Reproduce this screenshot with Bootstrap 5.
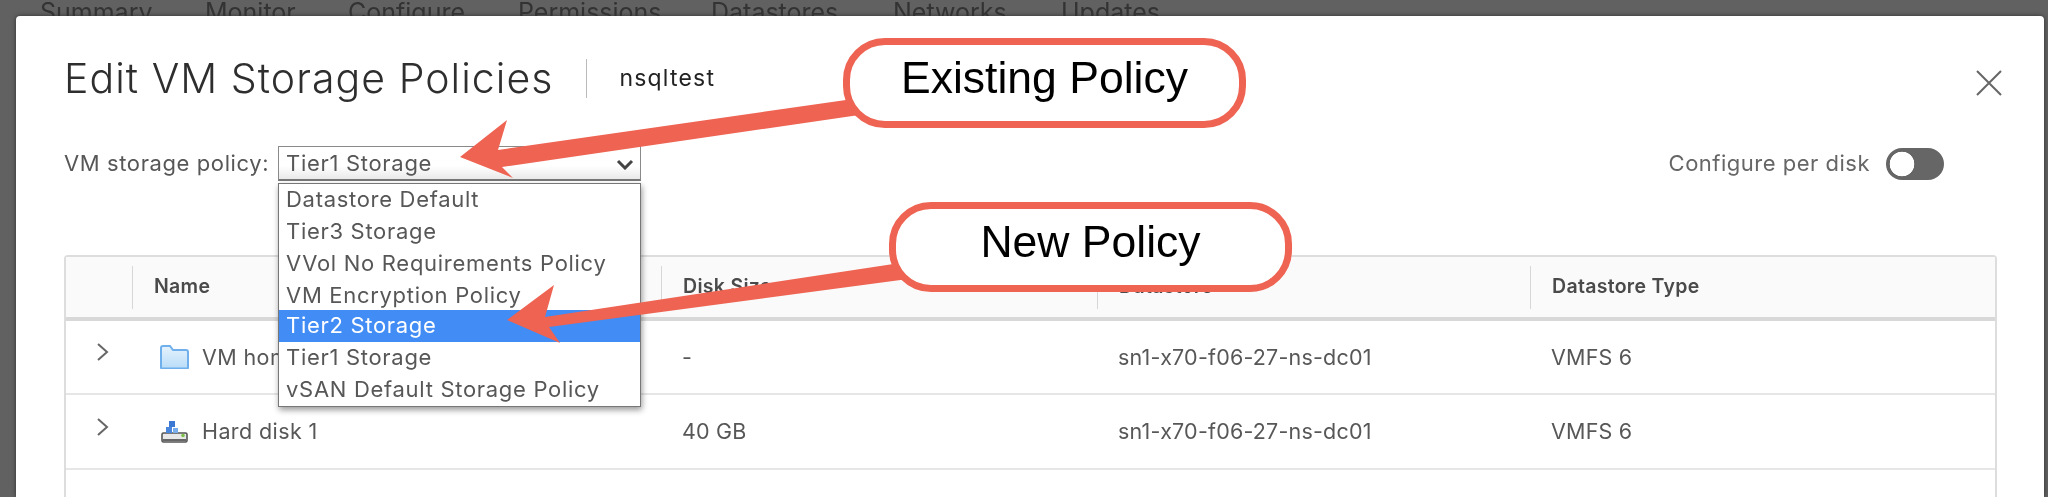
<!doctype html>
<html lang="en">
<head>
<meta charset="utf-8">
<title>Edit VM Storage Policies</title>
<link href="https://cdn.jsdelivr.net/npm/bootstrap@5.3.0/dist/css/bootstrap.min.css" rel="stylesheet">
<style>
html,body{height:497px;overflow:hidden}
body{background:#616161;font-family:Inter,"Noto Sans",sans-serif;color:#575757;font-size:22px}
.scene{position:relative;height:497px;overflow:hidden;filter:blur(.55px)}
.tabstrip{height:16px;overflow:hidden;font-size:25px;line-height:24px;color:#333;position:relative}
.tabstrip span{position:absolute;top:0}
.dialog{background:#fff;margin:0 4px 0 16px;height:481px;padding:42px 47px 0 48px;border-radius:4px 4px 0 0;box-shadow:0 0 4px rgba(0,0,0,.5)}
.dtitle{font-size:41px;font-weight:300;line-height:40px;color:#2e2e2e;letter-spacing:1.050px;white-space:nowrap}
.dsep{width:1px;height:39px;background:#bbb;margin:0 32px 0 33px}
.dsub{font-size:23px;color:#222;letter-spacing:1.200px}
.dclose{margin-right:-5px;margin-top:10px;line-height:0}
.polrow{margin-top:48px;height:35px}
.pollabel{width:214px;font-size:22px;letter-spacing:.6px;white-space:nowrap}
.selwrap{width:363px;position:relative}
.polselect.form-select{height:35px;border-radius:0;border:1px solid #8a8a8a;border-bottom:2px solid #777;padding:0 0 0 7px;font-size:22px;letter-spacing:.7px;color:#575757;line-height:30px;
 background:url("data:image/svg+xml,%3Csvg xmlns='http://www.w3.org/2000/svg' width='18' height='11'%3E%3Cpath d='M2 2l7 7 7-7' fill='none' stroke='%23444' stroke-width='3'/%3E%3C/svg%3E") no-repeat right 6px top 12px,linear-gradient(#fff 60%,#e9e9e9)}
.optlist{position:absolute;left:0;top:37px;width:363px;height:224px;border:1px solid #777;border-radius:0;box-shadow:1px 3px 6px rgba(0,0,0,.4);background:#fff;z-index:3}
.optlist .list-group-item{border:0;border-radius:0;height:32px;line-height:30px;padding:0 0 0 7px;font-size:22px;letter-spacing:.7px;color:#575757;white-space:nowrap;background:transparent}
.optlist .list-group-item.active{background:#418cf5;color:#fff;margin-top:-1px;height:32px}
.perdisk{font-size:22px;letter-spacing:.5px;margin-right:53px;gap:16px;color:#666}
.perdisk .form-check-input{width:58px;height:32px;margin:0;border:2px solid #666;border-radius:16px;background-color:#666;background-image:radial-gradient(circle at 14px 50%,#fff 12px,transparent 12.6px);background-position:0 0;background-size:auto;float:none}
.gridwrap{margin-top:74px;border:solid #ddd;border-width:2px 2px 0;border-radius:4px 4px 0 0;height:260px}
.vmtable{table-layout:fixed;width:100%;margin:0;--bs-table-bg:transparent;--bs-table-color:#575757}
.vmtable th{padding:0;height:62px;background:#fafafa;border-bottom:4px solid #d8d8d8;font-size:19.500px;font-weight:600;color:#4a4a4a;letter-spacing:.3px;vertical-align:middle}
.hcell{border-left:1px solid #d7d7d7;height:43px;display:flex;align-items:center;padding-left:21px;white-space:nowrap}
.vmtable td{height:75px;padding:0 0 0 21px;border-bottom:2px solid #e6e6e6;font-size:21.500px;letter-spacing:.2px;vertical-align:middle;white-space:nowrap;overflow:hidden}
.vmtable td.cexp{padding:0 0 14px 30px}
.namecell{display:flex;align-items:center;gap:13px}
.namecell svg{margin-left:7px;flex:none}
.namecell span{letter-spacing:.4px}
.arrows{position:absolute;left:0;top:0;z-index:4}
.callout{position:absolute;z-index:5;width:403px;height:90px;border:7px solid #ee6352;border-radius:42px;background:#fff;color:#000;font-family:"Liberation Sans",Arial,sans-serif;font-size:44.500px;padding-bottom:10px}
.callout-a{left:843px;top:38px}
.callout-b{left:889px;top:202px}
</style>
</head>
<body>
<div class="scene">
  <div class="tabstrip">
    <span style="left:40px">Summary</span><span style="left:205px">Monitor</span><span style="left:348px">Configure</span><span style="left:518px">Permissions</span><span style="left:711px">Datastores</span><span style="left:893px">Networks</span><span style="left:1061px">Updates</span>
  </div>
  <div class="dialog">
    <div class="d-flex align-items-center">
      <div class="dtitle">Edit VM Storage Policies</div>
      <div class="dsep"></div>
      <div class="dsub">nsqltest</div>
      <div class="dclose ms-auto">
        <svg width="26" height="26" viewBox="0 0 26 26"><path d="M1 1l24 24M25 1L1 25" stroke="#666" stroke-width="2" fill="none"/></svg>
      </div>
    </div>
    <div class="polrow d-flex align-items-center">
      <div class="pollabel">VM storage policy:</div>
      <div class="selwrap">
        <select class="form-select polselect" aria-label="VM storage policy"><option>Tier1 Storage</option></select>
        <div class="list-group optlist">
          <div class="list-group-item">Datastore Default</div>
          <div class="list-group-item">Tier3 Storage</div>
          <div class="list-group-item">VVol No Requirements Policy</div>
          <div class="list-group-item">VM Encryption Policy</div>
          <div class="list-group-item active">Tier2 Storage</div>
          <div class="list-group-item">Tier1 Storage</div>
          <div class="list-group-item">vSAN Default Storage Policy</div>
        </div>
      </div>
      <div class="perdisk ms-auto d-flex align-items-center">
        <span>Configure per disk</span>
        <input class="form-check-input" type="checkbox" aria-label="Configure per disk">
      </div>
    </div>
    <div class="gridwrap">
      <table class="table vmtable">
        <colgroup><col style="width:66px"><col style="width:529px"><col style="width:436px"><col style="width:433px"><col></colgroup>
        <thead><tr>
          <th></th>
          <th><div class="hcell">Name</div></th>
          <th><div class="hcell">Disk Size</div></th>
          <th><div class="hcell">Datastore</div></th>
          <th><div class="hcell">Datastore Type</div></th>
        </tr></thead>
        <tbody>
          <tr>
            <td class="cexp"><svg width="14" height="20" viewBox="0 0 14 20"><path d="M2 2l9 8-9 8" fill="none" stroke="#666" stroke-width="2"/></svg></td>
            <td><div class="namecell">
              <svg width="29" height="24" viewBox="0 0 29 24"><defs><linearGradient id="fg" x1="0" y1="0" x2="0" y2="1"><stop offset="0" stop-color="#e6f3fd"/><stop offset="1" stop-color="#b9dcf8"/></linearGradient></defs><path d="M1 22.500V3q0-2 2-2h7l3 4h13q2 0 2 2v15.500q0 1-1 1H2q-1 0-1-1z" fill="url(#fg)" stroke="#6fb0ec" stroke-width="2"/></svg>
              <span>VM home</span></div></td>
            <td>-</td>
            <td>sn1-x70-f06-27-ns-dc01</td>
            <td>VMFS 6</td>
          </tr>
          <tr>
            <td class="cexp"><svg width="14" height="20" viewBox="0 0 14 20"><path d="M2 2l9 8-9 8" fill="none" stroke="#666" stroke-width="2"/></svg></td>
            <td><div class="namecell">
              <svg width="29" height="24" viewBox="0 0 29 24"><rect x="2" y="13" width="25" height="9" rx="1.500" fill="#e8e8e8" stroke="#555" stroke-width="1.600"/><rect x="3" y="19" width="23" height="2" fill="#666"/><rect x="6" y="7" width="6" height="6" fill="#4a86dc"/><rect x="9" y="1" width="6" height="6" fill="#3a78d4"/><rect x="13" y="8" width="5" height="5" fill="#7aaeea"/><circle cx="23" cy="15.500" r="1.800" fill="#7cc04b"/></svg>
              <span>Hard disk 1</span></div></td>
            <td>40 GB</td>
            <td>sn1-x70-f06-27-ns-dc01</td>
            <td>VMFS 6</td>
          </tr>
        </tbody>
      </table>
    </div>
  </div>
  <svg class="arrows" width="2048" height="497" viewBox="0 0 2048 497">
    <polygon fill="#ee6352" points="460,157 507,120 498,150 860,98 866,114 502,167 513,178"/>
    <polygon fill="#ee6352" points="507,320 554,285 545,317 900,263 908,279 549,327 560,343"/>
  </svg>
  <div class="callout callout-a d-flex align-items-center justify-content-center">Existing Policy</div>
  <div class="callout callout-b d-flex align-items-center justify-content-center">New Policy</div>
</div>
<script src="https://cdn.jsdelivr.net/npm/bootstrap@5.3.0/dist/js/bootstrap.bundle.min.js"></script>
</body>
</html>
